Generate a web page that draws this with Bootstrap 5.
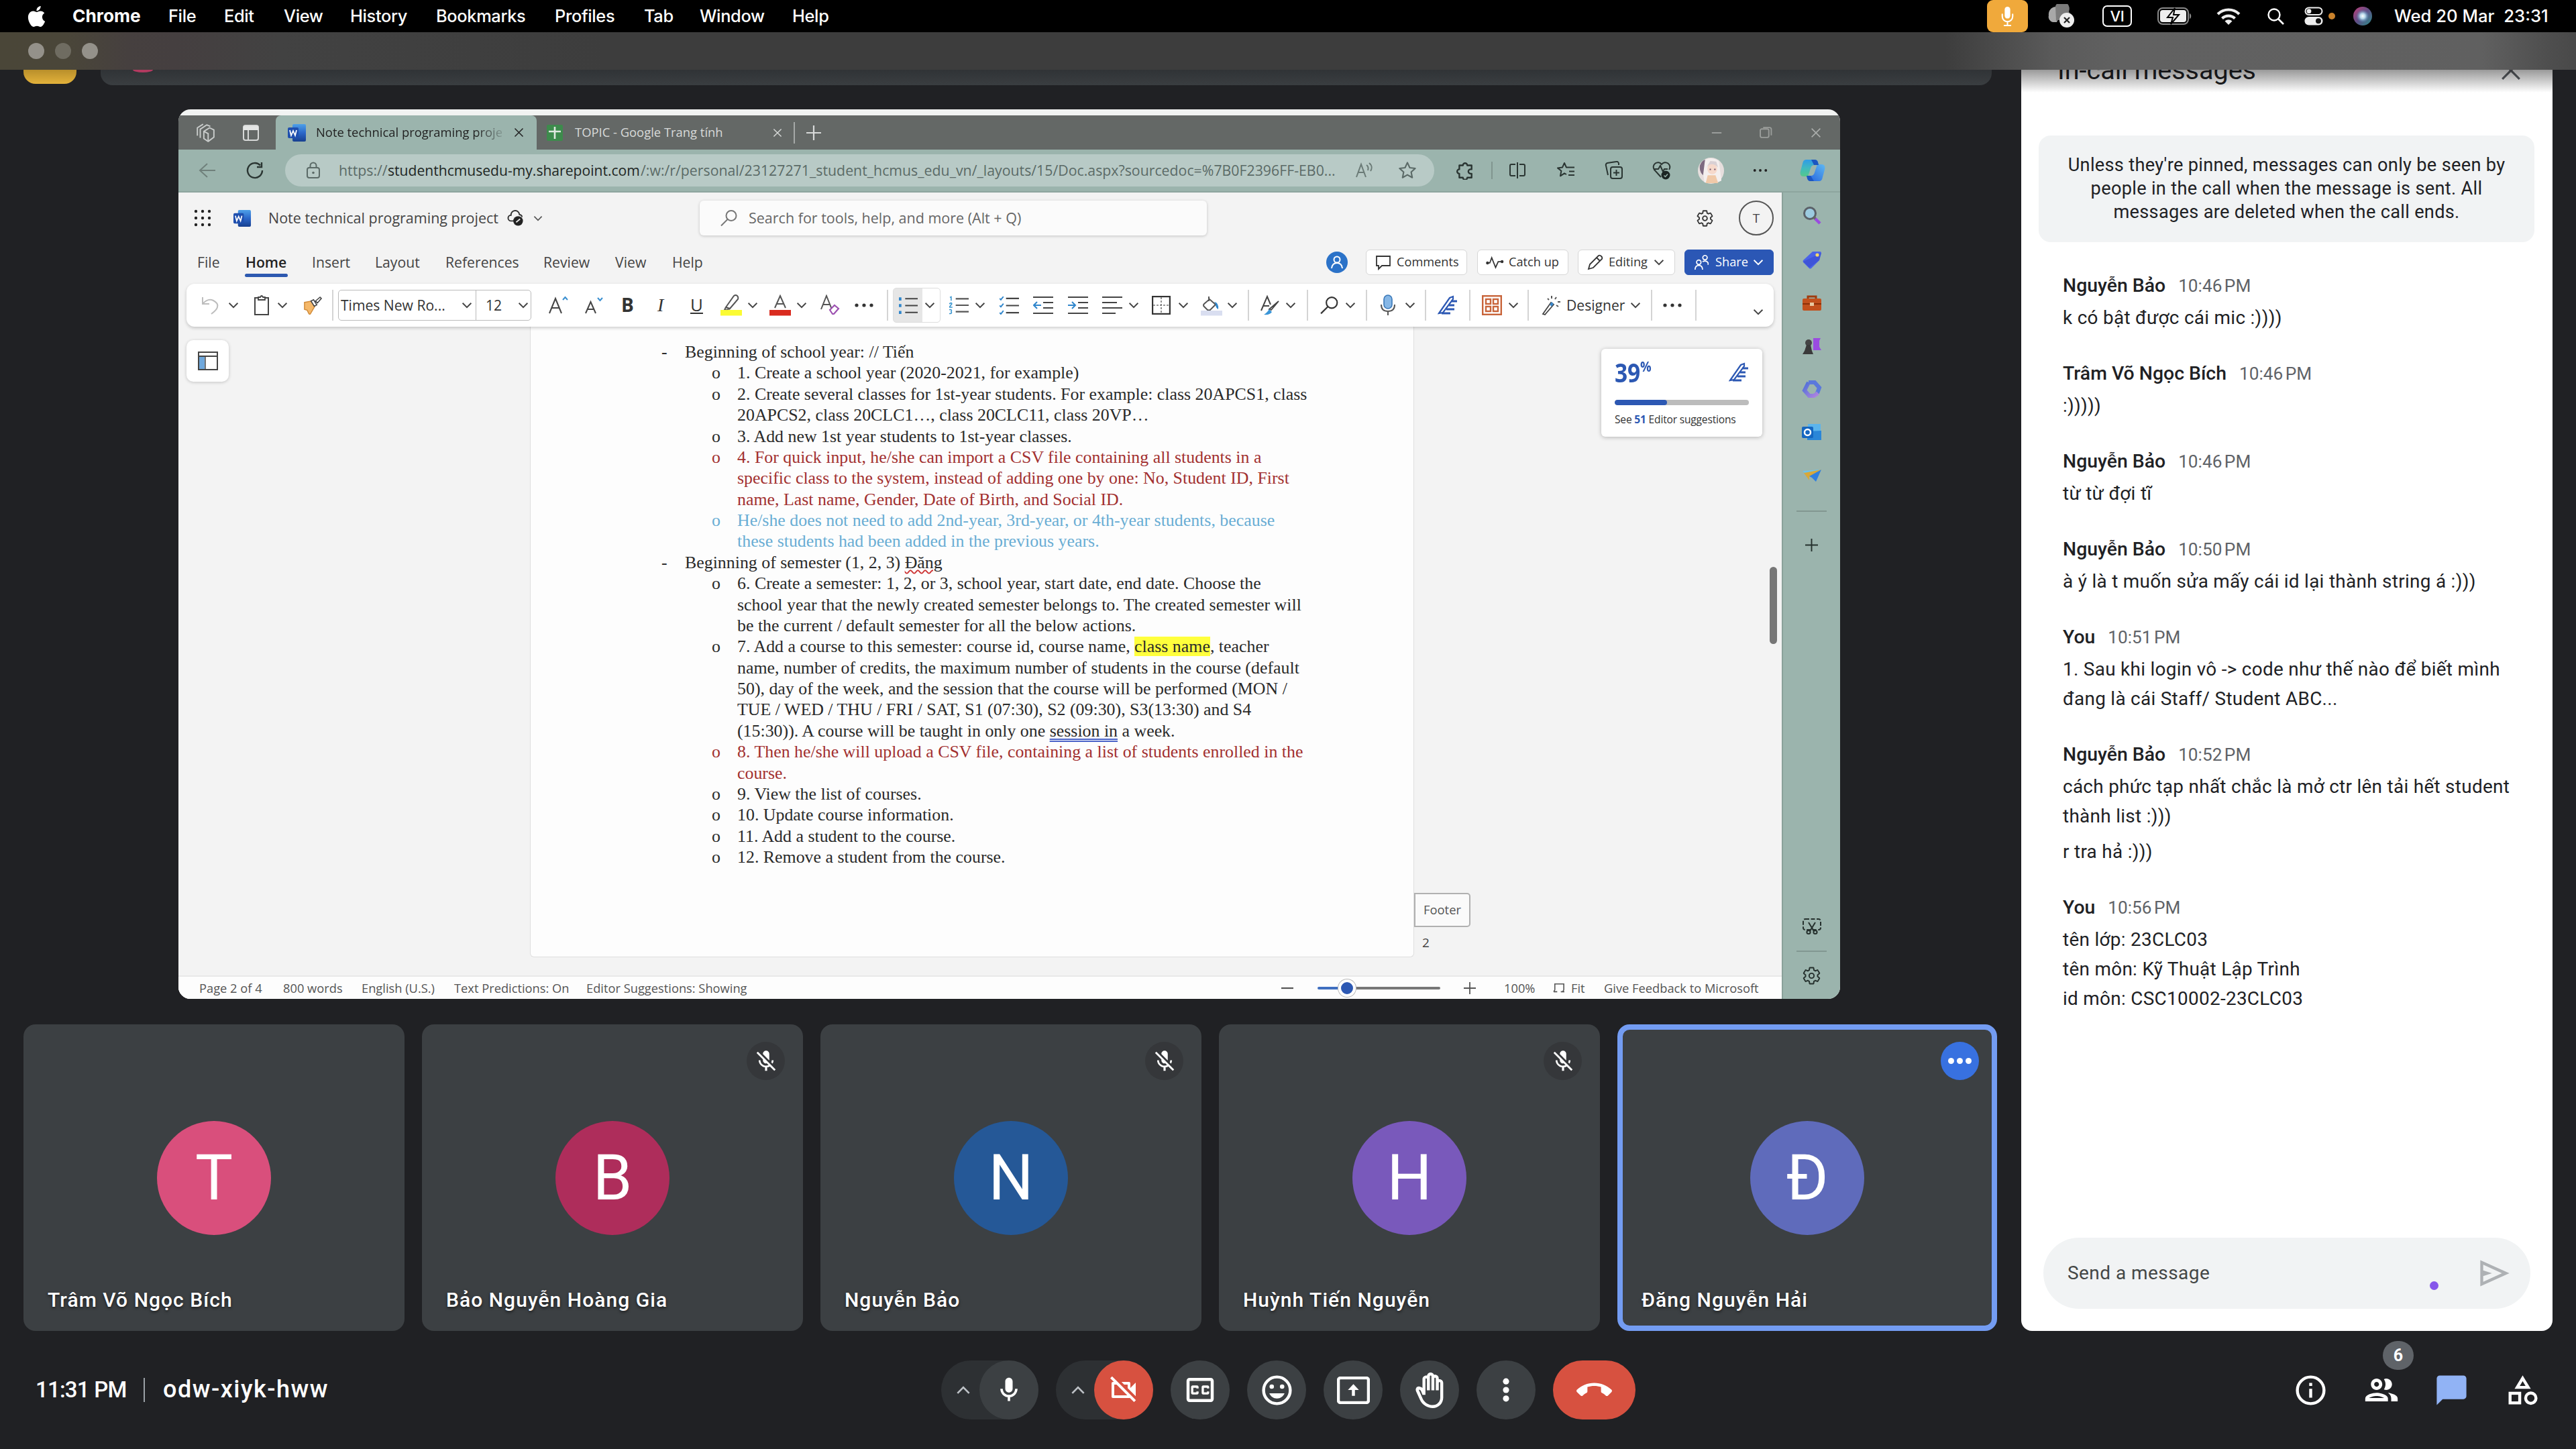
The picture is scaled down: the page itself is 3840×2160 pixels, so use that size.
<!DOCTYPE html>
<html lang="vi">
<head>
<meta charset="utf-8">
<title>Meet</title>
<link href="https://cdn.jsdelivr.net/npm/bootstrap@5.3.0/dist/css/bootstrap.min.css" rel="stylesheet">
<script src="https://cdn.jsdelivr.net/npm/bootstrap@5.3.0/dist/js/bootstrap.bundle.min.js"></script>
<style>
html,body{width:3840px;height:2160px;overflow:hidden}
body{background:#202124;color:#fff;font-family:Roboto,"Liberation Sans",sans-serif;font-size:29px;line-height:1.2}
svg{display:block;flex:none;overflow:visible}
.strip{display:flex;align-items:center;white-space:nowrap}
.strip>*{flex:none;display:flex;align-items:center;justify-content:center}
.strip>.txt,.strip>.strip{justify-content:flex-start}

/* system menu bar and window bar */
.sysbar{height:48px;background:#000;font-family:Inter,"Liberation Sans",sans-serif;font-size:25.4px;font-weight:500;letter-spacing:-.35px;color:#fff;flex:none}
.sysbar .b{font-weight:700;font-size:26.3px;letter-spacing:0}
.sysbar .clock{font-size:25.7px;letter-spacing:0}
.winbar{height:56px;flex:none;background:linear-gradient(90deg,#4a4638 0,#4a4639 100px,#46403f 190px,#453f40 260px,#424242 420px,#3d3d3d 900px,#3d3d3d 2900px,#5a5a5a 3060px,#616161 3160px,#606060 3700px,#4e4e4e 3800px,#494949 100%)}
.winbar i{width:24px;height:24px;border-radius:50%;background:#94918a}
.main-area{height:1880px;flex:none}
.stage{width:3013px;padding-left:35px}
.topstrip{height:23px}
.topstrip .amber{width:79px;border-radius:0 0 18px 18px;background:linear-gradient(#b98f2b,#e3b23b);height:21px}
.topstrip .pill{width:2819px;margin-left:36px;border-radius:0 0 18px 18px;background:linear-gradient(#303336,#3a3e41)}
.topstrip .pink{width:30px;height:4px;border-radius:0 0 15px 15px/0 0 4px 4px;background:#b23a60;margin-left:48px}

/* shared screen */
.share{width:2477px;height:1326px;margin:36px 0 0 231px;border-radius:18px;overflow:hidden;background:#f1f3f2;font-family:"Open Sans","Noto Sans",sans-serif;color:#444;font-size:22px}
.tabs{height:51px;margin-top:9px;background:#646866;color:#d8dad9;font-size:18.4px}
.tabs .act{background:#9bb4ad;color:#222;border-radius:8px 8px 0 0;height:51px;width:389px}
.tabs .fade-end{width:277px;overflow:hidden;-webkit-mask-image:linear-gradient(90deg,#000 86%,#0003)}
.addr{height:64px;background:#9bb4ad;font-size:21.3px;color:#5b6a67;border-bottom:2px solid #8da59e}
.addr .url{background:#b8cac6;border-radius:24px;height:48px;width:1713px}
.addr b{font-weight:500;font-size:21.1px;color:#1e2624}
.edgeside{width:87px;background:#9bb4ad;border-left:2px solid #8aa19a;flex:none}
.word{width:2390px;background:#f3f3f3}
.whead{height:76px;font-size:21.5px}
.whead .find{width:756px;height:52px;background:#fbfbfb;border-radius:6px;box-shadow:0 1px 4px #0003;color:#666}
.wmenu{height:60px;font-size:21.2px;padding-bottom:4px}
.wmenu .wbtn{height:38px;background:#fff;border:1px solid #d6d6d6;border-radius:6px;font-size:18.2px;color:#333}
.wmenu .wshare{background:#2b57b5;color:#fff;border-color:#2b57b5}
.home-tab{position:relative;color:#222;font-weight:600}
.home-tab::after{content:"";position:absolute;left:-1px;right:-1px;bottom:-9px;height:5px;border-radius:3px;background:#2d59b0}
.tbar{height:64px;width:2366px;margin-left:12px;background:#fff;border-radius:12px;box-shadow:0 2px 5px #0003;position:relative;color:#333;font-size:21.1px}
.fontbox{width:288px;height:46px;border:1px solid #bbb;border-radius:5px}
.fontbox .fsz{border-left:1px solid #bbb;height:44px}
.canvas-area{height:967px}
.gutter{width:524px}
.navbtn{width:63px;height:62px;margin:20px 0 0 12px;background:#fff;border-radius:10px;box-shadow:0 1px 5px #0003}
.paper{width:1318px;height:940px;background:#fdfdfd;border:1px solid #dedede;border-top:0;border-radius:0 0 6px 6px;padding:22px 0 0 195px;font-family:"Liberation Serif",serif;font-size:25.88px;line-height:31.38px;color:#2a2a2a;white-space:nowrap}
.paper .l1{display:flex}
.paper .l1>span:first-child{width:35px}
.paper .l2{display:flex;padding-left:75px}
.paper .l2>span:first-child{width:38px}
.red{color:#a23030}.blu{color:#69add4}
.hl{background:#ffff3c}
.wavy{text-decoration:underline wavy #c33 2px;text-underline-offset:2px}
.dbl{text-decoration:underline double #4a63c8 2px;text-underline-offset:3px}
.score{width:240px;height:131px;margin:33px 0 0 279px;background:#fff;border-radius:6px;box-shadow:0 1px 6px #0004;padding:7px 20px 0 20px;font-size:15.6px;letter-spacing:-.2px;color:#333}
.score .num{font-size:40px;font-weight:700;color:#2c58b3;line-height:56px;transform:scaleX(.84);transform-origin:0 50%}
.score sup{font-size:22px;top:-.75em}
.bar{height:8px;background:#bcbcbc;border-radius:4px;margin-top:13px;overflow:hidden}
.bar div{height:8px;background:#2c58b3;border-radius:4px}
.foot{width:84px;height:51px;margin-top:680px;border:2px solid #b0b0b0;border-radius:0 5px 5px 0;background:#fafafa;font-size:18.4px;color:#555}
.pgno{font-size:19px;padding:12px 0 0 12px}
.scr{position:absolute;left:2372px;top:682px;width:11px;height:115px;border-radius:6px;background:#767676}
.stat{height:35px;background:#fdfdfd;border-top:2px solid #e8e8e8;font-size:18.3px;color:#555}
.slider{width:183px;height:4px;background:linear-gradient(90deg,#3f6fc0 43px,#777 43px);border-radius:2px;position:relative}
.slider::after{content:"";position:absolute;left:31px;top:-11px;width:26px;height:26px;border-radius:50%;background:#2c58b3;border:4px solid #fff;box-shadow:0 0 0 1px #bbb}

/* participant tiles */
.tiles{margin-top:38px;gap:26px}
.tile{width:568px;height:457px;border-radius:18px;background:#3c4043;position:relative;font-size:30px;font-weight:500}
.tile.on{border:8px solid #739cf2;width:566px}
.avatar{width:170px;height:170px;border-radius:50%;font-size:94px;font-weight:400;line-height:1}
.tile .who{position:absolute;left:36px;bottom:28px;text-shadow:0 2px 4px #0009;letter-spacing:1.05px}
.tile.on .who{left:28px;bottom:20px}
.tile .mk{position:absolute;right:27px;top:26px;width:57px;height:57px;border-radius:50%;background:#35373a}
.tile.on .mk{right:19px;top:18px;background:#3871e0;gap:4px}
.mk i{width:9px;height:9px;border-radius:50%;background:#fff}

/* chat */
.chat{width:792px;background:#fff;border-radius:0 0 16px 16px;color:#202124;overflow:hidden;position:relative}
.chat .shade{position:absolute;left:0;top:0;width:100%;height:34px;background:linear-gradient(#0006,#0000)}
.chat h2{font-size:39.5px;font-weight:400;height:98px;margin:0;padding:0 46px 0 54px}
.chat h2 span{margin-top:-23px;line-height:48px}
.chat h2 svg{margin-top:-15px}
.note{width:739px;height:159px;margin:0 auto 0 26px;border-radius:18px;background:#f1f3f4;font-size:27.2px;line-height:35px;letter-spacing:.3px}
.msgs{padding:43px 0 0 62px;white-space:nowrap;font-size:27.9px}
.msg{margin-bottom:39px}
.msg .nm{font-weight:500;height:44px;line-height:44px;font-size:28.4px}
.msg .tm{color:#5f6368;font-size:26.2px;word-spacing:-3px;margin-left:19px}
.msg p{margin:4px 0 0;line-height:44px;letter-spacing:.3px}
.msg p+p{margin-top:9px}
.compose{position:absolute;left:33px;bottom:33px;width:726px;height:106px;border-radius:53px;background:#f1f3f4;padding:0 27px 0 36px;color:#444746;font-size:28px;letter-spacing:.45px}
.compose i{position:absolute;left:576px;top:65px;width:13px;height:13px;border-radius:50%;background:#8657ea}

/* call controls */
.ctl{height:176px}
.ctl .rb{width:88px;height:88px;border-radius:44px;background:#3c4043}
.ctl .endb{width:123px}
.ctl .grp{width:145px;height:88px;border-radius:44px;background:#2d3033;justify-content:space-between;padding-left:22px}
.ctl .off{background:#d75140}
.btns{gap:26px}
.side-tools{margin-left:980px;gap:53px}
.meet{width:1403px;padding-left:53px;font-size:34px;font-weight:500}
.meet .clk{font-size:33px;letter-spacing:-.8px;width:136px;white-space:nowrap}
.meet .room{font-size:36px;letter-spacing:1.5px}
.meet .bar-v{width:2px;height:36px;background:#9aa0a6;margin:0 27px 0 25px}
.cnt{position:absolute;left:134px;top:-44px;width:46px;height:43px;border-radius:22px;background:#5f6368;font-size:25px;font-weight:700}
</style>
</head>
<body class="d-flex flex-column">
<svg width="0" height="0" style="position:absolute">
<defs>
<linearGradient id="gw" x1="0" y1="0" x2="0" y2="1"><stop offset="0" stop-color="#4ea0e8"/><stop offset=".5" stop-color="#2b67c9"/><stop offset="1" stop-color="#173f8f"/></linearGradient>
<linearGradient id="gc" x1="0" y1="0" x2="0" y2="1"><stop offset="0" stop-color="#2f9be8"/><stop offset=".5" stop-color="#3fb9c0"/><stop offset="1" stop-color="#56c98a"/></linearGradient>
<linearGradient id="gd" x1="1" y1="0" x2="0" y2="1"><stop offset="0" stop-color="#5fb8f2"/><stop offset="1" stop-color="#2360dc"/></linearGradient>
<linearGradient id="g3" x1="0" y1="0" x2="1" y2="1"><stop offset="0" stop-color="#4b6fd8"/><stop offset="1" stop-color="#b084e0"/></linearGradient>
<linearGradient id="gs2" x1="0" y1="0" x2="1" y2="1"><stop offset="0" stop-color="#c0407a"/><stop offset=".5" stop-color="#5d4f86"/><stop offset="1" stop-color="#2c8f8a"/></linearGradient>
<radialGradient id="gs"><stop offset="0" stop-color="#fff"/><stop offset=".3" stop-color="#bfe4f4" stop-opacity=".9"/><stop offset=".75" stop-color="#4a90c0" stop-opacity="0"/></radialGradient>
</defs>
<symbol id="apple" viewBox="0 0 24 24"><path fill="#fff" d="M12.152 6.896c-.948 0-2.415-1.078-3.96-1.04-2.04.027-3.91 1.183-4.961 3.014-2.117 3.675-.546 9.103 1.519 12.09 1.013 1.454 2.208 3.09 3.792 3.039 1.52-.065 2.09-.987 3.935-.987 1.831 0 2.35.987 3.96.948 1.637-.026 2.676-1.48 3.676-2.948 1.156-1.688 1.636-3.325 1.662-3.415-.039-.013-3.182-1.221-3.22-4.857-.026-3.04 2.48-4.494 2.597-4.559-1.429-2.09-3.623-2.324-4.39-2.376-2-.156-3.675 1.09-4.61 1.09zM15.53 3.83c.843-1.012 1.4-2.427 1.245-3.83-1.207.052-2.662.805-3.532 1.818-.78.896-1.454 2.338-1.273 3.714 1.338.104 2.715-.688 3.559-1.701"/></symbol>
<symbol id="mic" viewBox="0 0 24 24"><path fill="#fff" d="M12 14c1.660 0 3-1.340 3-3V5c0-1.660-1.340-3-3-3S9 3.340 9 5v6c0 1.660 1.340 3 3 3zM17 11c0 2.760-2.240 5-5 5s-5-2.240-5-5H5c0 3.530 2.610 6.430 6 6.920V21h2v-3.080c3.390-.49 6-3.390 6-6.920h-2z"/></symbol>
<symbol id="smic" viewBox="0 0 24 30"><rect x="8" y="1" width="8" height="17" rx="4" fill="#fff"/><path d="M4.500 12v3a7.500 7.500 0 0 0 15 0v-3M12 22.500v5M7.500 28h9" fill="none" stroke="#fff" stroke-width="2" stroke-linecap="round"/></symbol>
<symbol id="micoff" viewBox="0 0 24 24"><path fill="#fff" d="M19 11h-1.700c0 .74-.16 1.430-.43 2.050l1.230 1.230c.56-.98.9-2.090.9-3.280zm-4.020.17c0-.06.02-.11.02-.17V5c0-1.660-1.340-3-3-3S9 3.340 9 5v.18l5.980 5.990zM4.270 3L3 4.270l6.010 6.010V11c0 1.660 1.330 3 2.990 3 .22 0 .44-.03.65-.08l1.660 1.660c-.71.33-1.500.52-2.310.52-2.760 0-5.300-2.100-5.300-5.100H5c0 3.410 2.720 6.230 6 6.720V21h2v-3.280c.91-.13 1.770-.45 2.540-.9L19.730 21 21 19.730 4.270 3z"/></symbol>
<symbol id="camoff" viewBox="0 0 24 24"><path fill="#fff" d="M9.560 8l-2-2-4.150-4.140L2 3.270 4.730 6H4c-.55 0-1 .45-1 1v10c0 .55.45 1 1 1h12c.21 0 .39-.08.55-.18L19.730 21l1.410-1.410-8.860-8.860L9.560 8zM5 16V8h1.730l8 8H5zm10-8v2.610l6 6V6.500l-4 4V7c0-.55-.45-1-1-1h-5.610l2 2H15z"/></symbol>
<symbol id="cc" viewBox="0 0 24 24"><path fill="#fff" d="M19 4H5c-1.110 0-2 .9-2 2v12c0 1.100.89 2 2 2h14c1.100 0 2-.9 2-2V6c0-1.100-.9-2-2-2zm0 14H5V6h14v12zM7 15h3c.55 0 1-.45 1-1v-1H9.500v.5h-2v-3h2v.5H11v-1c0-.55-.45-1-1-1H7c-.55 0-1 .45-1 1v4c0 .55.45 1 1 1zm7 0h3c.55 0 1-.45 1-1v-1h-1.500v.5h-2v-3h2v.5H18v-1c0-.55-.45-1-1-1h-3c-.55 0-1 .45-1 1v4c0 .55.45 1 1 1z"/></symbol>
<symbol id="mood" viewBox="0 0 24 24"><circle cx="12" cy="12" r="9" fill="none" stroke="#fff" stroke-width="2"/><circle cx="8.500" cy="9.500" r="1.500" fill="#fff"/><circle cx="15.500" cy="9.500" r="1.500" fill="#fff"/><path fill="#fff" d="M12 17.500c2.330 0 4.310-1.460 5.110-3.500H6.890c.8 2.040 2.780 3.500 5.110 3.500z"/></symbol>
<symbol id="present" viewBox="0 0 24 20"><rect x="1" y="1" width="22" height="18" rx="1.500" fill="none" stroke="#fff" stroke-width="2.200"/><path d="M12 5.500l-4 4.200h2.900V14h2.200V9.700H16z" fill="#fff"/></symbol>
<symbol id="hand" viewBox="0 0 24 24"><path fill="#fff" fill-rule="evenodd" d="M21 7c0-1.380-1.120-2.500-2.500-2.500-.17 0-.34.02-.5.05V4c0-1.380-1.120-2.500-2.500-2.500-.23 0-.46.03-.67.09C14.460.66 13.560 0 12.500 0c-1.230 0-2.250.89-2.460 2.060C9.870 2.020 9.690 2 9.500 2 8.120 2 7 3.120 7 4.500v5.890c-.34-.31-.76-.54-1.220-.66L5.010 9.520c-.83-.22-1.700.1-2.180.81-.46.68-.48 1.570-.14 2.320l2.560 5.700C6.790 21.800 10.240 24 14 24c3.860 0 7-3.140 7-7V7zm-2 10c0 2.760-2.240 5-5 5-2.980 0-5.710-1.740-6.930-4.460L4.460 11.500l.53.14c.46.12.83.46 1 .9L7 15h2V4.500c0-.28.22-.5.5-.5s.5.22.5.5V12h2V2.500c0-.28.22-.5.5-.5s.5.22.5.5V12h2V4c0-.28.22-.5.5-.5s.5.22.5.5v8h2V7c0-.28.22-.5.5-.5s.5.22.5.5v10z"/></symbol>
<symbol id="vdots" viewBox="0 0 24 24"><g fill="#fff"><circle cx="12" cy="5" r="2.500"/><circle cx="12" cy="12" r="2.500"/><circle cx="12" cy="19" r="2.500"/></g></symbol>
<symbol id="endcall" viewBox="0 0 24 24"><path fill="#fff" d="M12 9c-1.600 0-3.150.25-4.600.72v3.100c0 .39-.23.74-.56.9-.98.49-1.870 1.120-2.660 1.850-.18.18-.43.28-.7.28-.28 0-.53-.11-.71-.29L.29 13.080c-.18-.17-.29-.42-.29-.7 0-.28.11-.53.29-.71C3.340 8.780 7.460 7 12 7s8.660 1.780 11.710 4.670c.18.18.29.43.29.71 0 .28-.11.53-.29.71l-2.480 2.480c-.18.18-.43.29-.71.29-.27 0-.52-.11-.7-.28-.79-.74-1.690-1.360-2.670-1.850-.33-.16-.56-.5-.56-.9v-3.100C15.150 9.250 13.600 9 12 9z"/></symbol>
<symbol id="info" viewBox="0 0 24 24"><circle cx="12" cy="12" r="9" fill="none" stroke="#fff" stroke-width="2"/><path d="M11 7h2v2h-2zM11 11h2v6h-2z" fill="#fff"/></symbol>
<symbol id="people" viewBox="0 0 24 24"><path fill="#fff" fill-rule="evenodd" d="M9 13.750c-2.340 0-7 1.170-7 3.500V19h14v-1.750c0-2.330-4.660-3.500-7-3.500zM4.340 17c.84-.58 2.870-1.250 4.660-1.250s3.820.67 4.660 1.250H4.340zM9 12c1.930 0 3.500-1.570 3.500-3.500S10.930 5 9 5 5.500 6.570 5.500 8.500 7.070 12 9 12zm0-5c.83 0 1.500.67 1.500 1.500S9.830 10 9 10s-1.500-.67-1.500-1.500S8.170 7 9 7zm7.040 6.810c1.160.84 1.960 1.960 1.960 3.440V19h4v-1.750c0-2.020-3.500-3.170-5.960-3.440zM15 12c1.930 0 3.500-1.570 3.500-3.500S16.930 5 15 5c-.54 0-1.040.13-1.500.35.63.89 1 1.980 1 3.150s-.37 2.260-1 3.150c.46.22.96.35 1.500.35z"/></symbol>
<symbol id="bubble" viewBox="0 0 24 24"><path fill="#91b3f5" d="M20 2H4c-1.100 0-2 .9-2 2v18l4-4h14c1.100 0 2-.9 2-2V4c0-1.100-.9-2-2-2z"/></symbol>
<symbol id="shapes" viewBox="0 0 24 24"><g fill="none" stroke="#fff" stroke-width="2"><path d="M12 3.900L15.700 10H8.300z"/><rect x="3.500" y="14" width="6.500" height="6.500"/><circle cx="17.500" cy="17.300" r="3.500"/></g></symbol>
<symbol id="send" viewBox="0 0 24 24"><path fill="#aeb1b4" fill-rule="evenodd" d="M2 3v18l20-9L2 3zm2 3.100L16.900 12 4 17.900V14l6-2-6-2V6.100z"/></symbol>
<symbol id="x" viewBox="0 0 20 20"><path d="M2 2L18 18M18 2L2 18" stroke="currentColor" stroke-width="2" fill="none"/></symbol>
<symbol id="chev" viewBox="0 0 20 12"><path d="M2 2L10 10L18 2" stroke="currentColor" stroke-width="2.400" fill="none"/></symbol>
<symbol id="up" viewBox="0 0 20 12"><path d="M2 10L10 2L18 10" stroke="#bdc1c6" stroke-width="2.500" fill="none"/></symbol>
<symbol id="plus" viewBox="0 0 20 20"><path d="M10 0V20M0 10H20" stroke="currentColor" stroke-width="2" fill="none"/></symbol>
<symbol id="minus" viewBox="0 0 20 20"><path d="M1 10H19" stroke="currentColor" stroke-width="2.200"/></symbol>
<symbol id="dots" viewBox="0 0 28 8"><g fill="currentColor"><circle cx="3" cy="4" r="2.600"/><circle cx="14" cy="4" r="2.600"/><circle cx="25" cy="4" r="2.600"/></g></symbol>
<symbol id="cloudx" viewBox="0 0 40 36"><path d="M2 17a11 11 0 0 1 20-8l-8 18H8A8 8 0 0 1 2 17z" fill="#a8a8a8"/><path d="M12 3a10 10 0 0 1 20 8l3 8-22 6z" fill="#7b7b7b"/><circle cx="29" cy="24" r="11" fill="#eee"/><path d="M25 20l8 8m0-8l-8 8" stroke="#222" stroke-width="2.200"/></symbol>
<symbol id="batt" viewBox="0 0 52 26"><rect x="1" y="1" width="45" height="24" rx="7" fill="none" stroke="#888" stroke-width="2"/><rect x="4" y="4" width="39" height="18" rx="4" fill="#eee"/><path d="M48 9c3 1 3 7 0 8z" fill="#888"/><path d="M26 1L15 15h8l-3 10 12-14h-8z" fill="#eee" stroke="#000" stroke-width="2"/></symbol>
<symbol id="wifi" viewBox="0 0 36 26"><g fill="none" stroke="#eee" stroke-width="4.200"><path d="M2 10a23 23 0 0 1 32 0"/><path d="M8.500 16.500a13.500 13.500 0 0 1 19 0"/></g><path d="M12.500 20.500a8 8 0 0 1 11 0L18 26z" fill="#eee"/></symbol>
<symbol id="mag" viewBox="0 0 26 26"><circle cx="11" cy="11" r="8.500" fill="none" stroke="currentColor" stroke-width="2.400"/><path d="M17.500 17.500L25 25" stroke="currentColor" stroke-width="2.600"/></symbol>
<symbol id="magl" viewBox="0 0 26 26"><circle cx="16" cy="9.500" r="7.500" fill="none" stroke="currentColor" stroke-width="2"/><path d="M10.500 15L1 24.500" stroke="currentColor" stroke-width="2"/></symbol>
<symbol id="cc2" viewBox="0 0 28 28"><rect x="1.500" y="1.500" width="25" height="10.500" rx="5.200" fill="none" stroke="#eee" stroke-width="2"/><circle cx="7" cy="6.700" r="3.400" fill="#eee"/><rect x=".5" y="15" width="27" height="12.500" rx="6.200" fill="#eee"/><circle cx="21" cy="21.200" r="4" fill="#111"/></symbol>
<symbol id="wordi" viewBox="0 0 28 28"><rect x="7" y="1" width="20" height="26" rx="2" fill="url(#gw)"/><rect x="0" y="6" width="16" height="16" rx="2" fill="#1f4fae"/><path d="M3 10l2 8 3-7 3 7 2-8" fill="none" stroke="#fff" stroke-width="1.800"/></symbol>
<symbol id="gear" viewBox="0 0 24 24"><path fill="none" stroke="currentColor" stroke-width="1.600" d="M19.430 12.980c.04-.32.07-.64.07-.98s-.03-.66-.07-.98l2.110-1.650c.19-.15.24-.42.12-.64l-2-3.460c-.12-.22-.39-.3-.61-.22l-2.490 1c-.52-.4-1.080-.73-1.690-.98l-.38-2.650C14.460 2.180 14.250 2 14 2h-4c-.25 0-.46.18-.49.42l-.38 2.650c-.61.25-1.170.59-1.690.98l-2.490-1c-.23-.09-.49 0-.61.22l-2 3.460c-.13.22-.07.49.12.64l2.110 1.650c-.04.32-.07.65-.07.98s.03.66.07.98l-2.110 1.650c-.19.15-.24.42-.12.64l2 3.460c.12.22.39.3.61.22l2.490-1c.52.4 1.080.73 1.690.98l.38 2.650c.03.24.24.42.49.42h4c.25 0 .46-.18.49-.42l.38-2.650c.61-.25 1.170-.59 1.690-.98l2.490 1c.23.09.49 0 .61-.22l2-3.460c.12-.22.07-.49-.12-.64l-2.110-1.650z"/><circle cx="12" cy="12" r="3" fill="none" stroke="currentColor" stroke-width="1.600"/></symbol>
<symbol id="cubes" viewBox="0 0 28 28"><g fill="none" stroke="#c9cccb" stroke-width="1.800" stroke-linejoin="round"><path d="M12 12l8-5 6 3v10l-8 6-6-4z"/><path d="M12 12l6 3v11M7 21V9l9-6 5 2M3 18V7l8-5"/></g></symbol>
<symbol id="side" viewBox="0 0 26 26"><rect x="2" y="2" width="22" height="22" rx="3" fill="none" stroke="#d6d8d7" stroke-width="2"/><path d="M2 3h22v6H2z" fill="#e4e6e5"/><path d="M9 9v15" stroke="#d6d8d7" stroke-width="2"/></symbol>
<symbol id="sheet" viewBox="0 0 24 24"><rect width="24" height="24" rx="2" fill="#3d8b4c"/><path d="M12 3v18M3 10h18" stroke="#dfe8e0" stroke-width="2.600"/></symbol>
<symbol id="restore" viewBox="0 0 18 18"><g fill="none" stroke="currentColor" stroke-width="1.800"><rect x="1" y="4" width="12" height="12" rx="2"/><path d="M5 2h9a2.500 2.500 0 0 1 2.500 2.500V13"/></g></symbol>
<symbol id="back" viewBox="0 0 26 26"><path d="M13 3L2 13l11 10M2 13h23" fill="none" stroke="#6f807b" stroke-width="2"/></symbol>
<symbol id="reload" viewBox="0 0 26 26"><path d="M24 13A11 11 0 1 1 21 5.500M23 1v7h-7" fill="none" stroke="#2a3532" stroke-width="2.400"/></symbol>
<symbol id="lock" viewBox="0 0 20 26"><g fill="none" stroke="#5b6a67" stroke-width="2"><rect x="1" y="9" width="18" height="15" rx="3"/><path d="M5.500 9V6a4.500 4.500 0 0 1 9 0v3"/></g><circle cx="10" cy="16.500" r="1.800" fill="#5b6a67"/></symbol>
<symbol id="read" viewBox="0 0 28 24"><path d="M2 22L9 3l7 19M4.500 15h9M17 4c3 2 3 5 2 8M21 1c5 4 4 9 2 12" fill="none" stroke="#6b7b77" stroke-width="2"/></symbol>
<symbol id="star" viewBox="0 0 24 24"><path d="M12 2l3 6.600 7 .8-5.200 4.800 1.400 7L12 17.700 5.800 21.200l1.400-7L2 9.400l7-.8z" fill="none" stroke="currentColor" stroke-width="1.800" stroke-linejoin="round"/></symbol>
<symbol id="favs" viewBox="0 0 28 26"><path d="M14 19l-3-1.700-6 4 1.400-7.500L1 9.400l7-.8L11 2l3 6.600h12M18 14.500h8M17 20h9" fill="none" stroke="#2a3532" stroke-width="2" stroke-linejoin="round"/></symbol>
<symbol id="puzzle" viewBox="0 0 26 26"><path d="M5 6h5a3 3 0 0 1 6 0h6v5.500h-1.500a3 3 0 0 0 0 6H22V23h-6a3 3 0 0 1-6 0H5v-5.500a3 3 0 0 1 0-6z" fill="none" stroke="#2a3532" stroke-width="2.200" stroke-linejoin="round"/></symbol>
<symbol id="split" viewBox="0 0 26 26"><path d="M10 4H4a2 2 0 0 0-2 2v13a2 2 0 0 0 2 2h6M16 4h6a2 2 0 0 1 2 2v13a2 2 0 0 1-2 2h-6M13 1v24" fill="none" stroke="#2a3532" stroke-width="2"/></symbol>
<symbol id="coll" viewBox="0 0 28 28"><g fill="none" stroke="#2a3532" stroke-width="2"><rect x="9" y="9" width="17" height="17" rx="3"/><path d="M17.500 13v9M13 17.500h9M5 21L2 7a3 3 0 0 1 2-4l13-2a3 3 0 0 1 4 3v2"/></g></symbol>
<symbol id="heart" viewBox="0 0 28 28"><path d="M13 24L3 13a6.500 6.500 0 0 1 11-8 6.500 6.500 0 0 1 11 8M3 12h6l3-5 4 9 2-4h5" fill="none" stroke="#2a3532" stroke-width="2"/><circle cx="20" cy="21" r="6.500" fill="#1c2523"/><path d="M17.500 21.500l2 2 3.500-4" stroke="#9bb4ad" fill="none" stroke-width="1.500"/></symbol>
<symbol id="anime" viewBox="0 0 40 40"><circle cx="20" cy="20" r="20" fill="#e6dedd"/><path d="M6 8q10-12 26-3l4 30-8 4L10 38z" fill="#f4efee"/><path d="M3 12q3-8 8-9l-3 24q-6-5-5-15z" fill="#7d6a80"/><ellipse cx="22" cy="17" rx="7.500" ry="8.500" fill="#f6d9cb"/><path d="M13 15q8-10 18 0l-3-9-9-1z" fill="#d9d0d4"/><path d="M15 27l12 0 4 12H12z" fill="#f0c9a8"/><path d="M18 18h2m5 0h2" stroke="#6a4a60" stroke-width="2"/></symbol>
<symbol id="copilot" viewBox="0 0 40 36"><path d="M10 2h13q4 0 5 4l1 4h-6q-5 0-6 5l-4 12H7q-7 0-5-8L5 8q1-6 5-6z" fill="url(#gc)"/><path d="M30 34H17q-4 0-5-5l-.5-3H17q5 0 6-5l4-12h6q7 0 5 8l-3 11q-1 6-5 6z" fill="url(#gd)"/><path d="M23 2h-5l4 8h7l-1-4q-1-4-5-4zM17 34h5l-5-8h-6l1 4q1 4 5 4z" fill="#1c56c0"/></symbol>
<symbol id="smag" viewBox="0 0 28 28"><circle cx="11" cy="11" r="8.500" fill="#9ccbe0" stroke="#5a6068" stroke-width="3"/><path d="M17 17l3 3" stroke="#666" stroke-width="4"/><path d="M19 19l7 7" stroke="#9a4be0" stroke-width="4.500"/></symbol>
<symbol id="tag" viewBox="0 0 30 28"><path d="M16 2l11 0q2 0 2 2l-3 11-12 12q-2 1-3 0L2 18q-1-2 0-3z" fill="#4a63e8"/><path d="M2 17l9 9L26 15l3-11z" fill="#3345c8" opacity=".5"/><circle cx="23" cy="7" r="2.600" fill="#f5d76a"/></symbol>
<symbol id="case" viewBox="0 0 30 26"><path d="M9 7V3h12v4" fill="none" stroke="#a03c10" stroke-width="3"/><rect x="1" y="6" width="28" height="18" rx="2" fill="#c2501c"/><path d="M1 14h28" stroke="#8c3008" stroke-width="2"/><path d="M12 12h6v5h-6z" fill="#e8c9a0"/></symbol>
<symbol id="chess" viewBox="0 0 32 28"><path d="M18 2h11l-2 4v9l3 5H18z" fill="#9a4be0"/><circle cx="11" cy="9" r="5" fill="#444"/><path d="M8 12h6l2 9 2 5H2l3-5z" fill="#3a3a3a"/></symbol>
<symbol id="m365" viewBox="0 0 30 28"><path d="M10 4h9l7 8-3 8" fill="none" stroke="#5a78dc" stroke-width="6"/><path d="M24 20l-6 4h-7l-7-8 6-12" fill="none" stroke="url(#g3)" stroke-width="6"/></symbol>
<symbol id="outl" viewBox="0 0 30 26"><rect x="9" y="1" width="19" height="14" fill="#5bb4ec"/><path d="M8 12l21-1v14H8z" fill="#2a86d8"/><rect x="0" y="5" width="17" height="17" rx="2" fill="#1566c0"/><circle cx="8.500" cy="13.500" r="4.500" fill="none" stroke="#fff" stroke-width="2.500"/></symbol>
<symbol id="plane" viewBox="0 0 30 22"><path d="M1 4l28-2-20 9z" fill="#6cc4ee"/><path d="M9 11L29 2 21 20l-6-6z" fill="#2f7fe0"/><path d="M3 7l26-5-18 10 0 6z" fill="#d8a83a"/></symbol>
<symbol id="snip" viewBox="0 0 30 26"><rect x="2" y="2" width="26" height="16" rx="3" fill="none" stroke="#25302d" stroke-width="2" stroke-dasharray="6 2.500"/><path d="M10 7l8 13M20 7l-8 13" stroke="#25302d" stroke-width="2"/><circle cx="10" cy="21.500" r="2.600" fill="#9bb4ad" stroke="#25302d" stroke-width="2"/><circle cx="20" cy="21.500" r="2.600" fill="#9bb4ad" stroke="#25302d" stroke-width="2"/></symbol>
<symbol id="waffle" viewBox="0 0 26 26"><g fill="#222"><circle cx="3" cy="3" r="2.200"/><circle cx="13" cy="3" r="2.200"/><circle cx="23" cy="3" r="2.200"/><circle cx="3" cy="13" r="2.200"/><circle cx="13" cy="13" r="2.200"/><circle cx="23" cy="13" r="2.200"/><circle cx="3" cy="23" r="2.200"/><circle cx="13" cy="23" r="2.200"/><circle cx="23" cy="23" r="2.200"/></g></symbol>
<symbol id="cloudok" viewBox="0 0 26 26"><path d="M10 17H6a4.500 4.500 0 0 1 0-9 6.500 6.500 0 0 1 13-1q4 1 4 4" fill="none" stroke="#333" stroke-width="2"/><circle cx="17" cy="17" r="7.500" fill="#222"/><path d="M14 19l6-5" stroke="#eee" stroke-width="1.800"/></symbol>
<symbol id="person" viewBox="0 0 32 32"><circle cx="16" cy="16" r="16" fill="#2b72c8"/><circle cx="16" cy="12" r="4.500" fill="none" stroke="#fff" stroke-width="2"/><path d="M8 25q1-8 8-8t8 8" fill="none" stroke="#fff" stroke-width="2"/></symbol>
<symbol id="cmt" viewBox="0 0 24 24"><path d="M2 3h20v14H10l-5 5v-5H2z" fill="none" stroke="#333" stroke-width="1.800"/></symbol>
<symbol id="pulse" viewBox="0 0 28 20"><path d="M2 11h4l3-8 6 15 4-9h4" fill="none" stroke="#333" stroke-width="1.800"/><circle cx="2.500" cy="11" r="2.300" fill="#333"/><circle cx="25" cy="9" r="2.300" fill="#333"/></symbol>
<symbol id="pencil" viewBox="0 0 24 24"><path d="M2 22l2-7L17 2q2-1 4 1t1 4L9 20zM14 5l5 5" fill="none" stroke="#333" stroke-width="1.800"/></symbol>
<symbol id="ppl2" viewBox="0 0 26 26"><g fill="none" stroke="#fff" stroke-width="1.800"><circle cx="8" cy="13" r="3.600"/><path d="M2 25q0-7 6-7t6 7"/><circle cx="18" cy="5.500" r="3.600"/><path d="M14 12q6-3 9 2v3"/></g></symbol>
<symbol id="undo" viewBox="0 0 28 28"><path d="M2 2v10h10M2 12q8-9 16-5t6 10q-1 4-9 10" fill="none" stroke="#bdbdbd" stroke-width="2"/></symbol>
<symbol id="paste" viewBox="0 0 24 30"><path d="M7 4H2v25h20V4h-5" fill="none" stroke="#444" stroke-width="2"/><path d="M7 7V3h3q2-4 4 0h3v4z" fill="#fff" stroke="#444" stroke-width="1.800"/></symbol>
<symbol id="brush" viewBox="0 0 30 28"><path d="M3 9l11-2 5 8-7 12q-2 1-3-2l-2-4-4-1z" fill="#f5b869" stroke="#d08a38" stroke-width="1.500"/><path d="M13 7l4-2 5 8-4 2zM20 7l7-6 2 2-6 7z" fill="#fff" stroke="#444" stroke-width="1.600"/></symbol>
<symbol id="grow" viewBox="0 0 30 28"><path d="M2 26L11 4l9 22M5.500 18h11" fill="none" stroke="#444" stroke-width="2"/><path d="M22 6l3.500-4L29 6" fill="none" stroke="#3a8fd0" stroke-width="2"/></symbol>
<symbol id="shrink" viewBox="0 0 30 28"><path d="M3 26L10.500 9 18 26M6 20h9" fill="none" stroke="#444" stroke-width="2"/><path d="M21 3l3.500 4L28 3" fill="none" stroke="#3a8fd0" stroke-width="2"/></symbol>
<symbol id="hlt" viewBox="0 0 32 32"><path d="M8 19L20 2q3-2 5 0t1 5L14 21zM8 19l6 3M8 19l-2 4h6" fill="none" stroke="#555" stroke-width="2"/><rect x="0" y="23" width="32" height="8.500" fill="#fbfb33"/></symbol>
<symbol id="fcol" viewBox="0 0 32 32"><path d="M8 20L16 2l8 18M11 14h10" fill="none" stroke="#555" stroke-width="2"/><rect x="0" y="23" width="32" height="8.500" fill="#d92b1f"/></symbol>
<symbol id="clr" viewBox="0 0 32 32"><path d="M2 22L10 2l8 20M5 15h10" fill="none" stroke="#555" stroke-width="2"/><path d="M15 23l7-7 6 5-7 8h-2z" fill="#fff" stroke="#9c50b0" stroke-width="2.200"/></symbol>
<symbol id="bul" viewBox="0 0 30 28"><path d="M10 3h20M10 14h20M10 25h20" stroke="#444" stroke-width="2.200"/><path d="M0 1h4v5H0zM0 11.500h4v5H0zM0 22.500h4v5H0z" fill="#2f86cc"/></symbol>
<symbol id="numl" viewBox="0 0 30 28"><path d="M10 4h20M10 14h20M10 24h20" stroke="#555" stroke-width="2.200"/><path d="M1 2l2-1v6M0 12q4-3 4 0l-4 5h5M0 21q5-1 3 3 2 3-3 3" fill="none" stroke="#3a96d0" stroke-width="1.600"/></symbol>
<symbol id="chk" viewBox="0 0 30 28"><path d="M10 3h20M10 14h20M10 25h20" stroke="#444" stroke-width="2.200"/><path d="M0 3l2 2 4-5M0 14l2 2 4-5M0 25l2 2 4-5" fill="none" stroke="#2f86cc" stroke-width="2"/></symbol>
<symbol id="outd" viewBox="0 0 30 28"><path d="M0 2h30M15 10h15M15 18h15M0 26h30" stroke="#444" stroke-width="2.200"/><path d="M12 14H1M6 9l-5 5 5 5" fill="none" stroke="#2f86cc" stroke-width="2"/></symbol>
<symbol id="ind" viewBox="0 0 30 28"><path d="M0 2h30M15 10h15M15 18h15M0 26h30" stroke="#444" stroke-width="2.200"/><path d="M0 14h11M6 9l5 5-5 5" fill="none" stroke="#2f86cc" stroke-width="2"/></symbol>
<symbol id="aln" viewBox="0 0 30 28"><path d="M0 2h30M0 10h22M0 18h30M0 26h20" stroke="#444" stroke-width="2.200"/></symbol>
<symbol id="bord" viewBox="0 0 28 28"><rect x="1" y="1" width="26" height="26" fill="none" stroke="#333" stroke-width="2.400"/><path d="M14 2v24M2 14h24" stroke="#777" stroke-width="1.600" stroke-dasharray="3 2"/></symbol>
<symbol id="bkt" viewBox="0 0 32 32"><path d="M12 3v7M5 14l8-7 9 8-8 8q-2 1-4 0l-5-5q-2-2 0-4z" fill="none" stroke="#555" stroke-width="2"/><path d="M20 11q7 1 6 11-4-2-4-8z" fill="#2f86cc"/><rect x="0" y="24" width="32" height="7.500" fill="#d9def0"/></symbol>
<symbol id="sty" viewBox="0 0 30 32"><path d="M2 24L11 3l5 12M5 17h9" fill="none" stroke="#444" stroke-width="2"/><path d="M28 10L17 23l-3-1z" fill="#fff" stroke="#444" stroke-width="1.800"/><path d="M14 22l4 4q-3 5-12 4 4-2 8-8z" fill="#3a96d8"/></symbol>
<symbol id="mic2" viewBox="0 0 24 32"><rect x="6" y="1" width="12" height="20" rx="6" fill="#86b7e6" stroke="#3a78b8" stroke-width="1.600"/><path d="M2 15q0 10 10 10t10-10M12 25v6" fill="none" stroke="#555" stroke-width="2"/></symbol>
<symbol id="edt" viewBox="0 0 30 30"><path d="M2 27L18 4l5-2v4L8 26z" fill="#fff" stroke="#2c58b3" stroke-width="2.200"/><path d="M20 9h9M17 15h8M13 21h12M6 27h13" stroke="#2c58b3" stroke-width="3"/></symbol>
<symbol id="addin" viewBox="0 0 30 30"><g fill="none" stroke="#c8643a" stroke-width="2.400"><rect x="1.200" y="1.200" width="27.600" height="27.600"/><rect x="6" y="6" width="7" height="7"/><rect x="17" y="6" width="7" height="7"/><rect x="6" y="17" width="7" height="7"/><rect x="17" y="17" width="7" height="7"/></g></symbol>
<symbol id="wand" viewBox="0 0 28 30"><path d="M2 28L14 11l4 3L5 29z" fill="#fff" stroke="#444" stroke-width="1.800"/><path d="M12 14l3-4 3 3-3 4z" fill="#3a86c8"/><path d="M9 5l2 2M15 1v4M22 3l-2 3M24 10h4M22 15l3 2" stroke="#555" stroke-width="2"/></symbol>
<symbol id="nav" viewBox="0 0 30 28"><rect x="1" y="1" width="28" height="26" fill="#fff" stroke="#444" stroke-width="2"/><path d="M1 7h28" stroke="#444" stroke-width="2"/><rect x="2" y="8" width="8" height="18" fill="#6fa8dc"/><path d="M11 8v18" stroke="#444" stroke-width="1.500"/></symbol>
<symbol id="fit" viewBox="0 0 20 18"><path d="M3 12V2h15v10M1 15h6M13 15h6M3 12l-2 3M18 12l-2 3" fill="none" stroke="#555" stroke-width="1.800"/></symbol>
</svg>

<div class="sysbar strip" id="sys"></div>
<div class="winbar d-flex align-items-center"><i style="margin-left:42px"></i><i class="opacity-50" style="margin-left:16px"></i><i style="margin-left:16px"></i></div>

<div class="main-area d-flex">
  <div class="stage">
    <div class="topstrip d-flex"><div class="amber"></div><div class="pill"><div class="pink"></div></div></div>
    <div class="share position-relative">
      <div class="tabs strip" id="tabs"></div>
      <div class="addr strip" id="addr"></div>
      <div class="d-flex">
        <div class="word">
          <div class="whead strip" id="whead"></div>
          <div class="wmenu strip" id="wmenu"></div>
          <div class="tbar strip" id="tbar"></div>
          <div class="canvas-area d-flex">
            <div class="gutter"><div class="navbtn d-flex align-items-center justify-content-center"><svg width="30" height="28"><use href="#nav"/></svg></div></div>
            <div class="paper">
              <div class="l1"><span>-</span><span>Beginning of school year: // Tiến</span></div>
              <div class="l2"><span>o</span><span>1. Create a school year (2020-2021, for example)</span></div>
              <div class="l2"><span>o</span><span>2. Create several classes for 1st-year students. For example: class 20APCS1, class<br>20APCS2, class 20CLC1…, class 20CLC11, class 20VP…</span></div>
              <div class="l2"><span>o</span><span>3. Add new 1st year students to 1st-year classes.</span></div>
              <div class="l2 red"><span>o</span><span>4. For quick input, he/she can import a CSV file containing all students in a<br>specific class to the system, instead of adding one by one: No, Student ID, First<br>name, Last name, Gender, Date of Birth, and Social ID.</span></div>
              <div class="l2 blu"><span>o</span><span>He/she does not need to add 2nd-year, 3rd-year, or 4th-year students, because<br>these students had been added in the previous years.</span></div>
              <div class="l1"><span>-</span><span>Beginning of semester (1, 2, 3) <span class="wavy">Đăng</span></span></div>
              <div class="l2"><span>o</span><span>6. Create a semester: 1, 2, or 3, school year, start date, end date. Choose the<br>school year that the newly created semester belongs to. The created semester will<br>be the current / default semester for all the below actions.</span></div>
              <div class="l2"><span>o</span><span>7. Add a course to this semester: course id, course name, <span class="hl">class name</span>, teacher<br>name, number of credits, the maximum number of students in the course (default<br>50), day of the week, and the session that the course will be performed (MON /<br>TUE / WED / THU / FRI / SAT, S1 (07:30), S2 (09:30), S3(13:30) and S4<br>(15:30)). A course will be taught in only one <span class="dbl">session in</span> a week.</span></div>
              <div class="l2 red"><span>o</span><span>8. Then he/she will upload a CSV file, containing a list of students enrolled in the<br>course.</span></div>
              <div class="l2"><span>o</span><span>9. View the list of courses.</span></div>
              <div class="l2"><span>o</span><span>10. Update course information.</span></div>
              <div class="l2"><span>o</span><span>11. Add a student to the course.</span></div>
              <div class="l2"><span>o</span><span>12. Remove a student from the course.</span></div>
            </div>
            <div>
              <div class="score text-nowrap">
                <div class="d-flex justify-content-between align-items-center"><span class="num">39<sup>%</sup></span><svg width="30" height="30"><use href="#edt"/></svg></div>
                <div class="bar"><div style="width:39%"></div></div>
                <div class="mt-2 pt-1">See <b style="color:#2c58b3">51</b> Editor suggestions</div>
              </div>
              <div class="foot d-flex align-items-center justify-content-center">Footer</div>
              <div class="pgno">2</div>
            </div>
          </div>
          <div class="stat strip" id="stat"></div>
        </div>
        <div class="edgeside d-flex flex-column align-items-center" id="edge"></div>
      </div>
      <div class="scr"></div>
    </div>

    <div class="tiles d-flex" id="tiles"></div>
  </div>

  <div class="chat">
    <h2 class="d-flex justify-content-between align-items-start"><span>In-call messages</span><svg width="32" height="32" color="#5f6368"><use href="#x"/></svg></h2>
    <div class="note d-flex align-items-center justify-content-center text-center"><div>Unless they're pinned, messages can only be seen by<br>people in the call when the message is sent. All<br>messages are deleted when the call ends.</div></div>
    <div class="msgs">
      <div class="msg"><div class="nm">Nguyễn Bảo<span class="tm fw-normal">10:46 PM</span></div><p>k có bật được cái mic :))))</p></div>
      <div class="msg"><div class="nm">Trâm Võ Ngọc Bích<span class="tm fw-normal">10:46 PM</span></div><p>:)))))</p></div>
      <div class="msg"><div class="nm">Nguyễn Bảo<span class="tm fw-normal">10:46 PM</span></div><p>từ từ đợi tĩ</p></div>
      <div class="msg"><div class="nm">Nguyễn Bảo<span class="tm fw-normal">10:50 PM</span></div><p>à ý là t muốn sửa mấy cái id lại thành string á :)))</p></div>
      <div class="msg"><div class="nm">You<span class="tm fw-normal">10:51 PM</span></div><p>1. Sau khi login vô -&gt; code như thế nào để biết mình<br>đang là cái Staff/ Student ABC...</p></div>
      <div class="msg"><div class="nm">Nguyễn Bảo<span class="tm fw-normal">10:52 PM</span></div><p>cách phức tạp nhất chắc là mở ctr lên tải hết student<br>thành list :)))</p><p>r tra hả :)))</p></div>
      <div class="msg"><div class="nm">You<span class="tm fw-normal">10:56 PM</span></div><p>tên lớp: 23CLC03<br>tên môn: Kỹ Thuật Lập Trình<br>id môn: CSC10002-23CLC03</p></div>
    </div>
    <div class="compose d-flex align-items-center justify-content-between"><span>Send a message</span><i></i><svg width="52" height="52"><use href="#send"/></svg></div>
    <div class="shade"></div>
  </div>
</div>

<div class="ctl d-flex align-items-center">
  <div class="meet d-flex align-items-center"><span class="clk">11:31 PM</span><span class="bar-v"></span><span class="room">odw-xiyk-hww</span></div>
  <div class="btns d-flex align-items-center">
    <div class="grp d-flex align-items-center"><svg width="22" height="13"><use href="#up"/></svg><div class="rb d-flex align-items-center justify-content-center"><svg width="44" height="44"><use href="#mic"/></svg></div></div>
    <div class="grp d-flex align-items-center"><svg width="22" height="13"><use href="#up"/></svg><div class="rb off d-flex align-items-center justify-content-center"><svg width="48" height="48"><use href="#camoff"/></svg></div></div>
    <div class="rb d-flex align-items-center justify-content-center"><svg width="54" height="54"><use href="#cc"/></svg></div>
    <div class="rb d-flex align-items-center justify-content-center"><svg width="53" height="53"><use href="#mood"/></svg></div>
    <div class="rb d-flex align-items-center justify-content-center"><svg width="49" height="41"><use href="#present"/></svg></div>
    <div class="rb d-flex align-items-center justify-content-center"><svg width="53" height="53"><use href="#hand"/></svg></div>
    <div class="rb d-flex align-items-center justify-content-center"><svg width="44" height="44"><use href="#vdots"/></svg></div>
    <div class="rb off endb d-flex align-items-center justify-content-center"><svg width="53" height="53"><use href="#endcall"/></svg></div>
  </div>
  <div class="side-tools d-flex align-items-center position-relative"><svg width="53" height="53"><use href="#info"/></svg><svg width="58" height="58" style="margin-left:-3px"><use href="#people"/></svg><svg width="53" height="53" style="margin-left:-4px"><use href="#bubble"/></svg><svg width="53" height="53"><use href="#shapes"/></svg>
    <span class="cnt d-flex align-items-center justify-content-center">6</span></div>
</div>

<script>
// Item builders: I = icon by centre, T = text by left edge, S = separator, H = any block by left edge
const I=(cx,w,id,h=w,c='')=>({x:cx-w/2,w,h:`<svg width="${w}" height="${h}" ${c?`color="${c}"`:''}><use href="#${id}"/></svg>`});
const T=(x,w,t,c='')=>({x,w,c:'txt '+c,h:`<span>${t}</span>`});
const S=(cx,h=46,c='#d4d4d4')=>({x:cx-1,w:2,h:`<i style="width:2px;height:${h}px;background:${c}"></i>`});
const H=(x,w,c,inner='')=>({x,w,c,h:inner});
const C=cx=>I(cx,16,'chev',10,'#444');
function cells(x0,items){let p=x0;return items.map(i=>{const m=i.x-p;p=i.x+i.w;return `<div class="${i.c||''}" style="margin-left:${m}px;width:${i.w}px">${i.h}</div>`}).join('')}
const strip=(id,x0,items)=>document.getElementById(id).innerHTML=cells(x0,items);

strip('sys',0,[I(54,31,'apple'),T(108,101,'Chrome','b'),T(251,40,'File'),T(334,46,'Edit'),T(423,57,'View'),T(522,85,'History'),T(650,134,'Bookmarks'),T(827,90,'Profiles'),T(960,41,'Tab'),T(1043,95,'Window'),T(1181,55,'Help'),
 H(2962,61,'','<div class="d-flex align-items-center justify-content-center" style="width:61px;height:48px;border-radius:9px;background:#f0a93b"><svg width="25" height="31"><use href="#smic"/></svg></div>'),
 I(3072,40,'cloudx',36),H(3134,44,'','<div class="d-flex align-items-center justify-content-center" style="width:44px;height:32px;border:2px solid #fff;border-radius:7px;font-size:22px">VI</div>'),
 I(3242,52,'batt',26),I(3322,36,'wifi',26),I(3392,26,'mag'),I(3449,28,'cc2'),H(3471,10,'','<i style="width:10px;height:10px;border-radius:50%;background:#c9822b"></i>'),
 H(3508,28,'','<svg width="28" height="28"><circle cx="14" cy="14" r="14" fill="url(#gs2)"/><circle cx="14" cy="14" r="13" fill="url(#gs)"/></svg>'),T(3569,231,'Wed 20 Mar&nbsp; 23:31','clock')]);

strip('tabs',266,[I(306,30,'cubes'),I(374,26,'side'),
 H(411,389,'act strip',cells(411,[I(443,28,'wordi'),H(471,277,'txt','<span class="fade-end">Note technical programing proje</span>'),I(773,15,'x')])),
 I(827,24,'sheet'),T(857,223,'TOPIC - Google Trang tính'),I(1159,14,'x'),S(1184,32,'#a5a8a7'),I(1213,22,'plus'),I(2559,16,'minus',16,'#9a9d9b'),I(2632,19,'restore',19,'#9a9d9b'),I(2707,16,'x',16,'#aaadab')]);
strip('addr',266,[I(309,26,'back'),I(380,26,'reload'),
 H(425,1713,'url strip',cells(425,[I(467,20,'lock',26),T(505,73,'https://'),T(578,377,'<b>studenthcmusedu-my.sharepoint.com</b>'),T(955,1041,'/:w:/r/personal/23127271_student_hcmus_edu_vn/_layouts/15/Doc.aspx?sourcedoc=%7B0F2396FF-EB0...'),I(2034,28,'read',24),I(2098,28,'star')])),
 I(2184,28,'puzzle'),S(2224,26,'#80958f'),I(2262,26,'split'),I(2335,28,'favs',26),I(2406,28,'coll'),I(2477,28,'heart'),I(2550,39,'anime'),I(2624,22,'dots',6,'#222'),I(2702,40,'copilot',36)]);
strip('whead',266,[I(302,26,'waffle'),I(361,27,'wordi'),T(400,343,'Note technical programing project'),I(768,25,'cloudok'),I(802,14,'chev',9,'#555'),
 H(1043,756,'find strip',cells(1043,[I(1087,26,'magl',26,'#777'),T(1116,410,'Search for tools, help, and more (Alt + Q)')])),
 I(2541,27,'gear',27,'#333'),H(2592,52,'','<div class="d-flex align-items-center justify-content-center rounded-circle" style="width:52px;height:52px;border:2px solid #555;font-size:19px">T</div>')]);
strip('wmenu',266,[T(294,34,'File'),T(366,62,'Home','home-tab'),T(465,55,'Insert'),T(559,66,'Layout'),T(664,107,'References'),T(810,70,'Review'),T(917,49,'View'),T(1002,47,'Help'),
 I(1993,32,'person'),
 H(2036,151,'wbtn strip',cells(2037,[I(2062,24,'cmt'),T(2082,92,'Comments')])),
 H(2202,136,'wbtn strip',cells(2203,[I(2228,27,'pulse',20),T(2249,75,'Catch up')])),
 H(2352,145,'wbtn strip',cells(2353,[I(2378,24,'pencil'),T(2398,59,'Editing'),C(2473)])),
 H(2511,133,'wbtn wshare strip',cells(2512,[I(2537,24,'ppl2'),T(2557,48,'Share'),I(2621,16,'chev',10,'#fff')]))]);
strip('tbar',278,[I(314,28,'undo'),C(348),I(390,24,'paste',30),C(421),I(465,29,'brush'),S(496),
 H(504,288,'fontbox strip',cells(505,[T(508,158,'Times New Ro...'),C(696),H(709,1,'fsz'),T(724,23,'12'),C(780)])),
 I(832,30,'grow'),I(885,30,'shrink'),T(926,18,'<b style="font-size:28px">B</b>'),T(980,12,'<i style="font:italic 28px Liberation Serif">I</i>'),T(1029,18,'<u style="font-size:26px">U</u>'),
 I(1090,32,'hlt'),C(1122),I(1163,32,'fcol'),C(1195),I(1238,32,'clr'),I(1288,28,'dots',8),S(1323),
 H(1331,71,'strip','<div class="strip" style="width:71px;height:52px;border-radius:5px;border:1px solid #ddd;background:linear-gradient(90deg,#e6e6e6 43px,#fff 43px)">'+cells(1332,[I(1354,28,'bul',27),C(1386)])+'</div>'),
 I(1429,29,'numl',28),C(1461),I(1504,29,'chk',27),I(1555,30,'outd'),I(1607,30,'ind'),I(1658,30,'aln'),C(1690),I(1731,28,'bord'),C(1764),I(1806,32,'bkt'),C(1837),S(1861),
 I(1893,30,'sty',32),C(1924),S(1949),I(1982,28,'magl'),C(2013),S(2037),I(2069,24,'mic2',32),C(2102),S(2125),I(2158,30,'edt'),S(2191),I(2224,30,'addin'),C(2256),S(2278),I(2312,28,'wand',30),T(2335,87,'Designer'),C(2438),S(2462),I(2493,28,'dots',8),S(2528),
 H(2613,16,'','<svg width="16" height="10" color="#444" style="margin-top:20px"><use href="#chev"/></svg>')]);
strip('stat',266,[T(297,96,'Page 2 of 4'),T(422,88,'800 words'),T(539,110,'English (U.S.)'),T(677,169,'Text Predictions: On'),T(874,243,'Editor Suggestions: Showing'),
 I(1919,20,'minus'),H(1964,183,'','<div class="slider"></div>'),I(2191,18,'plus'),T(2242,46,'100%'),I(2324,18,'fit',16),T(2342,20,'Fit'),T(2391,233,'Give Feedback to Microsoft')]);

// Edge sidebar: items stacked by vertical centre
let py=287;
document.getElementById('edge').innerHTML=[[321,28,28,'smag'],[387,30,28,'tag'],[452,30,26,'case'],[516,32,28,'chess'],[580,30,28,'m365'],[644,30,26,'outl'],[709,30,22,'plane'],[762,45,2,''],[812,19,19,'plus'],[1381,30,26,'snip'],[1418,45,2,''],[1454,29,29,'gear']]
 .map(([cy,w,h,id])=>{const m=cy-h/2-py;py=cy+h/2;return `<div style="margin-top:${m}px;height:${h}px">`+(id?`<svg width="${w}" height="${h}" color="#25302d"><use href="#${id}"/></svg>`:`<div style="width:${w}px;height:2px;background:#829791"></div>`)+'</div>'}).join('');

document.getElementById('tiles').innerHTML=[['T','#d94f7c','Trâm Võ Ngọc Bích',0],['B','#ae2d5b','Bảo Nguyễn Hoàng Gia',1],['N','#255897','Nguyễn Bảo',1],['H','#7959bb','Huỳnh Tiến Nguyễn',1],['Đ','#5f6bbb','Đăng Nguyễn Hải',2]]
 .map(([l,c,n,k])=>`<div class="tile d-flex align-items-center justify-content-center ${k==2?'on':''}"><div class="avatar d-flex align-items-center justify-content-center" style="background:${c}">${l}</div><div class="who">${n}</div>${k==1?'<div class="mk d-flex align-items-center justify-content-center"><svg width="38" height="38"><use href="#micoff"/></svg></div>':k==2?'<div class="mk d-flex align-items-center justify-content-center"><i></i><i></i><i></i></div>':''}</div>`).join('');
</script>
</body>
</html>
